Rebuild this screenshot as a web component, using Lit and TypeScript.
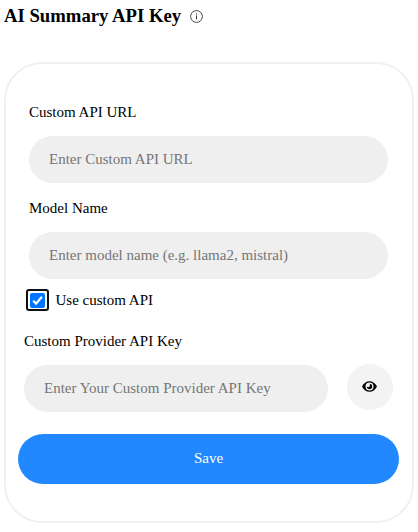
import { LitElement, html, css, svg } from "lit";
import { customElement, property } from "lit/decorators.js";

@customElement("pill-field")
class PillField extends LitElement {
  @property() label = "";
  @property() hint = "";

  static styles = css`
    :host { display: block; font: 15px/17px "Liberation Serif", "Times New Roman", serif; color: #000; }
    .label { display: block; margin-bottom: 15px; }
    .input {
      display: block; box-sizing: border-box; width: 100%; height: 47px; margin: 0;
      padding: 0 20px; border: 0; border-radius: 24px; background: #efefef;
      font: inherit; color: #000; outline: none;
    }
    .input::placeholder { color: #757575; opacity: 1; }
  `;

  render() {
    return html`
      <label class="label" for="f">${this.label}</label>
      <input class="input" id="f" placeholder=${this.hint} />
    `;
  }
}

@customElement("app-root")
class AppRoot extends LitElement {
  static styles = css`
    :host {
      display: block; box-sizing: border-box; height: 532px; padding: 5px 4px 0;
      background: #fff; color: #000;
      font: 15px/17px "Liberation Serif", "Times New Roman", serif;
    }
    .head { display: flex; align-items: center; gap: 9px; height: 22px; }
    .title { margin: 0; font-size: 18.72px; line-height: 22px; font-weight: bold; white-space: nowrap; }
    .info { display: block; width: 13px; height: 13px; margin-top: 1px; }
    .card {
      box-sizing: border-box; width: 410px; height: 461px; margin-top: 35px;
      padding: 40px 13px 0 12px; border: 2px solid #f0f0f0; border-radius: 38px;
    }
    .group { display: flex; flex-direction: column; gap: 17px; margin: 0 11px; }
    .check { display: flex; align-items: flex-start; gap: 6.5px; margin: 10px 0 0 8px; height: 23px; }
    .checklabel { margin-top: 3px; }
    .box {
      box-sizing: border-box; width: 23px; height: 22px; border: 2px solid #101010;
      border-radius: 3px; padding: 1.5px 2px; background: #fff; flex: none;
    }
    .tick { display: block; width: 15px; height: 15px; }
    .key { display: flex; align-items: flex-end; gap: 19px; margin: 21px 0 0 6px; }
    .keyfield { width: 304px; }
    .eye {
      display: flex; align-items: center; justify-content: center; width: 46px; height: 46px;
      margin: 0 0 2px; padding: 0; border: 0; border-radius: 50%; background: #f3f3f3;
    }
    .eyeicon { display: block; width: 16px; height: 16px; }
    .save {
      display: block; width: 381px; height: 50px; margin: 22px 0 0; padding: 0 0 2px; border: 0;
      border-radius: 25px; background: #2188ff; color: #fff; font: inherit;
    }
  `;

  render() {
    return html`
      <div class="head">
        <h3 class="title">AI Summary API Key</h3>
        <svg class="info" viewBox="0 0 13 13">
          ${svg`<circle cx="6.5" cy="6.5" r="5.9" fill="none" stroke="#333" stroke-width=".9"/>
          <path d="M6.5 5.4V9.3" stroke="#333" stroke-width="1"/>
          <circle cx="6.5" cy="3.9" r=".6" fill="#333"/>`}
        </svg>
      </div>
      <div class="card">
        <div class="group">
          <pill-field label="Custom API URL" hint="Enter Custom API URL"></pill-field>
          <pill-field label="Model Name" hint="Enter model name (e.g. llama2, mistral)"></pill-field>
        </div>
        <div class="check">
          <span class="box" role="checkbox" aria-checked="true" aria-label="Use custom API">
            <svg class="tick" viewBox="0 0 15 15">
              <rect width="15" height="15" rx="2" fill="#0075ff" />
              <path d="M3.2 7.7L6.1 10.6L11.9 3.8" fill="none" stroke="#fff" stroke-width="2.2" />
            </svg>
          </span>
          <span class="checklabel">Use custom API</span>
        </div>
        <div class="key">
          <pill-field class="keyfield" label="Custom Provider API Key" hint="Enter Your Custom Provider API Key"></pill-field>
          <button class="eye" aria-label="Show key">
            <svg class="eyeicon" viewBox="0 0 16 16">
              <path fill-rule="evenodd" d="M0 7.500C1.700 4.200 4.400 2.200 7.500 2.200S13.300 4.200 15 7.500C13.300 10.800 10.600 12.800 7.500 12.800S1.700 10.800 0 7.500ZM7.500 3.500A4 4 0 1 0 7.500 11.500A4 4 0 0 0 7.500 3.500Z" />
              <path d="M7.500 4.800A2.700 2.700 0 1 1 4.800 7.500A1.500 1.500 0 0 0 7.500 4.800Z" />
            </svg>
          </button>
        </div>
        <button class="save">Save</button>
      </div>
    `;
  }
}
